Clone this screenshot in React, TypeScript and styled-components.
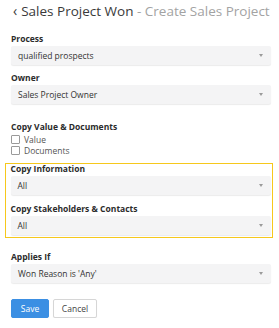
import React from 'react';
import styled, { createGlobalStyle } from 'styled-components';

const Global = createGlobalStyle`
  body {
    margin: 0;
    background: #ffffff;
    font-family: 'Open Sans', 'Liberation Sans', sans-serif;
    color: #333333;
  }
`;

const Page = styled.div`
  width: 279px;
  padding: 0 8px 0 11px;
  box-sizing: border-box;
`;

const Title = styled.h1`
  margin: 0;
  padding-top: 1px;
  font-size: 13.5px;
  line-height: 20px;
  font-weight: 400;
  color: #3a3a3a;
  white-space: nowrap;
  display: flex;
  align-items: center;
  gap: 4px;
  span.sub {
    color: #a3a3a3;
  }
`;

const Back = styled.span`
  font-size: 14px;
  color: #3a3a3a;
  margin-left: 2px;
`;

const Field = styled.div<{ top?: number }>`
  margin-top: ${({ top = 0 }) => top}px;
`;

const Label = styled.div`
  font-size: 8.5px;
  font-weight: 700;
  line-height: 10px;
  color: #2b2b2b;
  margin-bottom: 2px;
`;

const Select = styled.div`
  height: 19px;
  box-sizing: border-box;
  background: #f4f4f5;
  border-radius: 2px;
  box-shadow: 0 1px 1px rgba(0, 0, 0, 0.08);
  display: flex;
  align-items: center;
  justify-content: space-between;
  padding: 0 8px 0 7px;
  font-size: 8.5px;
  color: #333;
`;

const Caret = styled.span`
  width: 0;
  height: 0;
  border-left: 2.5px solid transparent;
  border-right: 2.5px solid transparent;
  border-top: 3px solid #9a9a9a;
`;

const CheckList = styled.div`
  margin-top: 1px;
`;

const CheckRow = styled.label`
  display: flex;
  align-items: center;
  gap: 4px;
  font-size: 8.5px;
  line-height: 11px;
  color: #555;
`;

const Box = styled.span`
  width: 7px;
  height: 7px;
  border: 1px solid #9a9a9a;
  border-radius: 1px;
  background: #fff;
`;

const Highlight = styled.div`
  margin: 7px -2px 0 -6px;
  border: 1.5px solid #f6c81c;
  padding: 0 1.5px 2.5px 4.5px;
`;

const Actions = styled.div`
  display: flex;
  gap: 4px;
  margin-top: 16px;
`;

const Button = styled.button<{ primary?: boolean }>`
  height: 19px;
  border-radius: 2px;
  font-family: inherit;
  font-size: 8.5px;
  padding: 0;
  cursor: pointer;
  width: ${({ primary }) => (primary ? 38 : 44)}px;
  background: ${({ primary }) => (primary ? '#3b8fe3' : '#ffffff')};
  color: ${({ primary }) => (primary ? '#ffffff' : '#444444')};
  border: 1px solid ${({ primary }) => (primary ? '#3b8fe3' : '#d6d6d6')};
  box-shadow: 0 1px 1px rgba(0, 0, 0, 0.06);
`;

const Dropdown = ({ value }: { value: string }) => (
  <Select>
    <span>{value}</span>
    <Caret />
  </Select>
);

export default function App() {
  return (
    <>
      <Global />
      <Page>
        <Title>
          <Back>‹</Back>
          <span>
            Sales Project Won <span className="sub">- Create Sales Project</span>
          </span>
        </Title>
        <Field top={13}>
          <Label>Process</Label>
          <Dropdown value="qualified prospects" />
        </Field>
        <Field top={8}>
          <Label>Owner</Label>
          <Dropdown value="Sales Project Owner" />
        </Field>
        <Field top={18}>
          <Label>Copy Value &amp; Documents</Label>
          <CheckList>
            <CheckRow>
              <Box />
              Value
            </CheckRow>
            <CheckRow>
              <Box />
              Documents
            </CheckRow>
          </CheckList>
        </Field>
        <Highlight>
          <Field>
            <Label>Copy Information</Label>
            <Dropdown value="All" />
          </Field>
          <Field top={8.5}>
            <Label>Copy Stakeholders &amp; Contacts</Label>
            <Dropdown value="All" />
          </Field>
        </Highlight>
        <Field top={14}>
          <Label>Applies If</Label>
          <Dropdown value="Won Reason is 'Any'" />
        </Field>
        <Actions>
          <Button primary>Save</Button>
          <Button>Cancel</Button>
        </Actions>
      </Page>
    </>
  );
}
